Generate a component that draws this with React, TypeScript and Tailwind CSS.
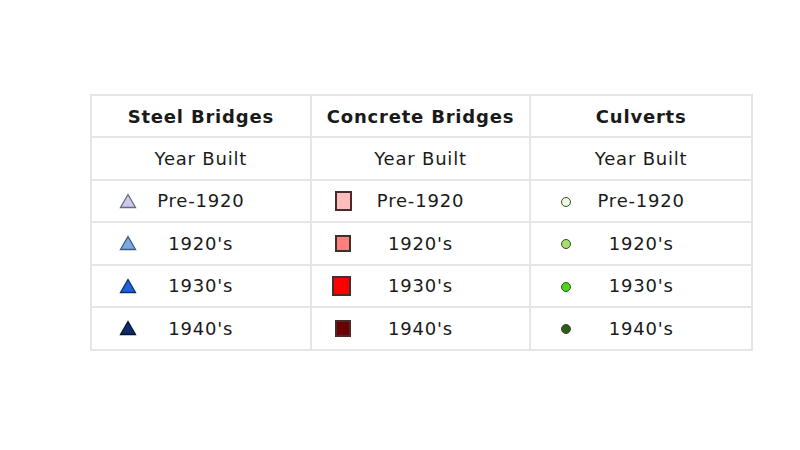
type Row = { label: string; tri: string; triStroke: string; sq: string; sqBox: string; dot: string };

const ROWS: Row[] = [
  { label: "Pre-1920", tri: "#c9c9ee", triStroke: "#6b6b80", sq: "#ffbcbc", sqBox: "w-[17px] h-[20px]", dot: "#eef6e6" },
  { label: "1920's", tri: "#7ea8e2", triStroke: "#3d5a80", sq: "#ff7f7f", sqBox: "w-[16px] h-[17px]", dot: "#a6e06a" },
  { label: "1930's", tri: "#1f62e0", triStroke: "#0d2e6e", sq: "#ff0000", sqBox: "-ml-[3px] w-[19px] h-[20px]", dot: "#4fd41e" },
  { label: "1940's", tri: "#0f2a66", triStroke: "#06122e", sq: "#6a0000", sqBox: "w-[16px] h-[17px]", dot: "#2e5a1c" },
];

function Tri({ fill, stroke }: { fill: string; stroke: string }) {
  return (
    <svg width="18" height="16" viewBox="0 0 18 16">
      <polygon points="9,1.5 16.5,14.5 1.5,14.5" fill={fill} stroke={stroke} strokeWidth="1.3" />
    </svg>
  );
}

function Cell({ icon, label, pad, last }: { icon: React.ReactNode; label: string; pad: string; last?: boolean }) {
  return (
    <div className={`grid h-[40.5px] grid-cols-[1fr_auto_1fr] items-center ${last ? "" : "border-r-2 border-[#e6e6e6]"}`}>
      <div className={`flex items-center ${pad}`}>{icon}</div>
      <span>{label}</span>
      <span />
    </div>
  );
}

export default function App() {
  return (
    <div className="h-[450px] w-[800px] bg-white pt-[94px] pl-[90px]" style={{ fontFamily: '"DejaVu Sans", Verdana, sans-serif' }}>
      <div className="w-[663px] border-2 border-[#e6e6e6] text-[18px] tracking-[0.8px] text-[#1a1a1a]">
        <div className="grid grid-cols-3 border-b-2 border-[#e6e6e6] font-bold">
          <div className="flex h-[40px] items-center justify-center border-r-2 border-[#e6e6e6]">Steel Bridges</div>
          <div className="flex h-[40px] items-center justify-center border-r-2 border-[#e6e6e6]">Concrete Bridges</div>
          <div className="flex h-[40px] items-center justify-center">Culverts</div>
        </div>
        <div className="grid grid-cols-3 border-b-2 border-[#e6e6e6]">
          <div className="flex h-[40.5px] items-center justify-center border-r-2 border-[#e6e6e6]">Year Built</div>
          <div className="flex h-[40.5px] items-center justify-center border-r-2 border-[#e6e6e6]">Year Built</div>
          <div className="flex h-[40.5px] items-center justify-center">Year Built</div>
        </div>
        {ROWS.map((r, i) => (
          <div key={r.label} className={`grid grid-cols-3 ${i < ROWS.length - 1 ? "border-b-2 border-[#e6e6e6]" : ""}`}>
            <Cell pad="pl-[27px]" label={r.label} icon={<Tri fill={r.tri} stroke={r.triStroke} />} />
            <Cell
              pad="pl-[23px]"
              label={r.label}
              icon={<span className={`block border-2 border-[#4a2a2a] ${r.sqBox}`} style={{ backgroundColor: r.sq }} />}
            />
            <Cell
              last
              pad="pl-[30px]"
              label={r.label}
              icon={<span className="mt-[2px] block h-[10px] w-[10px] rounded-full border border-[#2f4f22]" style={{ backgroundColor: r.dot }} />}
            />
          </div>
        ))}
      </div>
    </div>
  );
}
